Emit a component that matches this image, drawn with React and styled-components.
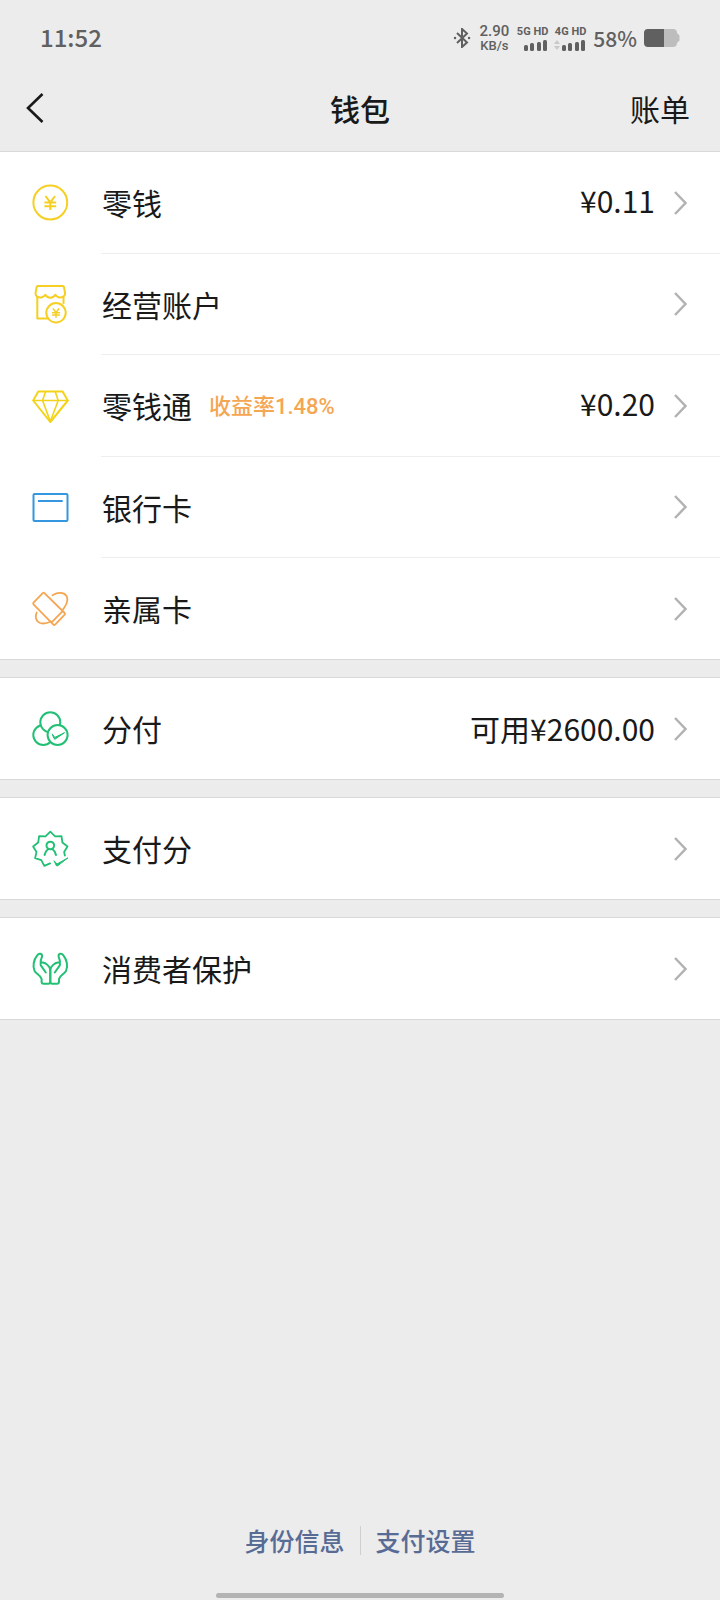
import React from 'react';
import styled, { createGlobalStyle, ThemeProvider } from 'styled-components';

const theme = {
  colors: {
    page: '#ececec',
    white: '#ffffff',
    text: '#191919',
    status: '#606060',
    line: '#d9d9d9',
    divider: '#eeeeee',
    arrow: '#b2b2b2',
    link: '#576b95',
    yellow: '#f5cf22',
    gold: '#f3d318',
    blue: '#3597df',
    orange: '#f5a652',
    green: '#22c074',
  },
};

const GlobalStyle = createGlobalStyle`
* {
  box-sizing: border-box;
}
body {
  margin: 0;
  background: #ececec;
  font-family: "Noto Sans CJK SC", "Noto Sans", sans-serif;
}
button {
  border: 0;
  padding: 0;
  background: none;
  color: inherit;
  font: inherit;
  text-align: left;
  cursor: pointer;
}
`

const Page = styled.div`
display: flex;
flex-direction: column;
min-height: 100vh;
color: ${(props) => props.theme.colors.text};
background: ${(props) => props.theme.colors.page};
`
const StatusBar = styled.div`
display: flex;
align-items: center;
justify-content: space-between;
height: 68px;
padding: 8px 40px 0;
color: ${(props) => props.theme.colors.status};
`
const Clock = styled.time`
padding-bottom: 3px;
font-size: 24px;
font-weight: 500;
line-height: 32px;
`
const StatusIcons = styled.div`
display: flex;
align-items: center;
gap: 7px;
`
const NetSpeed = styled.div`
display: flex;
flex-direction: column;
align-items: center;
margin-left: 2px;
font-family: Roboto, sans-serif;
font-size: 15px;
font-weight: 500;
line-height: 15px;
`
const SpeedUnit = styled.span`
font-size: 13px;
line-height: 14px;
`
const Signals = styled.div`
display: flex;
gap: 6px;
`
const Signal = styled.div`
display: flex;
flex-direction: column;
align-items: flex-end;
gap: 2px;
font-family: Roboto, sans-serif;
font-size: 11px;
font-weight: 700;
line-height: 11px;
`
const Percent = styled.span`
font-size: 21px;
font-weight: 500;
line-height: 28px;
`
const NavBar = styled.header`
display: grid;
grid-template-columns: 1fr auto 1fr;
align-items: center;
height: 84px;
padding: 0 30px 3px;
border-bottom: 1px solid ${(props) => props.theme.colors.line};
`
const BackButton = styled.button`
display: flex;
justify-self: start;
margin-left: -4px;
`
const Title = styled.h1`
margin: 0;
font-size: 30px;
font-weight: 500;
line-height: 44px;
`
const BillButton = styled.button`
justify-self: end;
font-size: 30px;
line-height: 44px;
`
const Groups = styled.main`
display: flex;
flex-direction: column;
gap: 17px;
`
const Group = styled.ul`
margin: 0;
padding: 0;
list-style: none;
background: ${(props) => props.theme.colors.white};
border-top: 1px solid ${(props) => props.theme.colors.line};
border-bottom: 1px solid ${(props) => props.theme.colors.line};
&:first-child {
  border-top: 0;
}
`
const Row = styled.button`
display: flex;
width: 100%;
min-height: 101px;
li:nth-child(odd):not(:last-child) > & {
  min-height: 102px;
}
`
const RowIcon = styled.span`
display: flex;
align-items: center;
align-self: stretch;
width: 101px;
padding-left: 30px;
`
const RowBody = styled.span`
display: flex;
flex: 1;
align-items: center;
align-self: stretch;
padding: 0 32px 0 1px;
li:not(:last-child) & {
  border-bottom: 1px solid ${(props) => props.theme.colors.divider};
}
`
const Label = styled.span`
padding-bottom: 1px;
font-size: 30px;
line-height: 44px;
`
const Rate = styled.span`
margin-left: 17px;
padding-top: 2px;
font-family: Roboto, "Noto Sans CJK SC", sans-serif;
font-size: 22px;
font-weight: 500;
line-height: 32px;
color: ${(props) => props.theme.colors.orange};
`
const Amount = styled.span`
margin-left: auto;
padding-bottom: ${(props) => (props.$raised ? '6px' : '2px')};
font-size: 30px;
line-height: 44px;
`
const Arrow = styled.svg`
flex: none;
margin-left: ${(props) => (props.$alone ? 'auto' : '19px')};
color: ${(props) => props.theme.colors.arrow};
`
const Footer = styled.footer`
display: flex;
flex-direction: column;
align-items: center;
gap: 35px;
margin-top: auto;
padding-bottom: 2px;
`
const FooterLinks = styled.nav`
display: flex;
align-items: center;
`
const FooterLink = styled.a`
padding: 0 15px;
font-size: 25px;
font-weight: 500;
line-height: 36px;
color: ${(props) => props.theme.colors.link};
text-decoration: none;
`
const FooterLine = styled.span`
width: 1px;
height: 29px;
background: #cfcfcf;
`
const HomeBar = styled.div`
width: 40%;
height: 5px;
border-radius: 3px;
background: #b3b3b3;
`
const IconSvg = styled.svg`
flex: none;
fill: none;
stroke: ${(props) => props.theme.colors[props.$color]};
stroke-width: 2;
stroke-linecap: round;
stroke-linejoin: round;
`

const Icon = ({ color, children }) => (
  <IconSvg $color={color} width="40" height="40" viewBox="0 0 40 40" aria-hidden="true">
    {children}
  </IconSvg>
)

const CoinIcon = () => (
  <Icon color="yellow">
    <circle cx="20.3" cy="19.5" r="16.9" />
    <path strokeLinecap="butt" d="M15.5 13l4.8 6.3 4.8-6.3M20.3 19.3v7.6M14.4 19.5h11.8M14.4 23.2h11.8" />
  </Icon>
)

const ShopIcon = () => (
  <Icon color="yellow">
    <path d="M5.6 8l1-5.800q.3-1.300 1.600-1.300h24.200q1.300 0 1.600 1.300L35 8c.6 3.200-3.400 5.200-6.400 4.200-1.600-.5-2.600-1.400-3.300-2.400-2 3.800-8 3.800-10 0-.7 1-1.700 1.900-3.300 2.400-3 1-7-1-6.400-4.200z" />
    <path d="M7.300 12.300v21.100h9.900M33.500 12.300v6" />
    <circle cx="26" cy="27.800" r="9.700" />
    <path strokeWidth="1.500" d="M23.200 23.800l2.800 3.700 2.800-3.700M26 27.500v4.700M22.500 27.700h7M22.500 30h7" />
  </Icon>
)

const DiamondIcon = () => (
  <Icon color="gold">
    <path d="M8.300 5.500h24.300l5.200 9-17.500 21.500L3.200 14.500z" />
    <path strokeWidth="1.600" d="M3.200 14.500h34.600M15.600 5.500l-3 9 7.700 21L28.200 14.500l-3-9" />
  </Icon>
)

const CardIcon = () => (
  <Icon color="blue">
    <rect x="3.500" y="6" width="34" height="27" rx="1" />
    <path strokeLinecap="butt" d="M8 13h24.700" />
  </Icon>
)

const FamilyCardIcon = () => (
  <Icon color="orange">
    <path strokeWidth="1.800" d="M12.700 4.100L3.500 13.600q-.8.900 0 1.700l19.900 20.300q.9.800 1.700 0l9.600-9.900q.7-.8 0-1.700L14.400 4.100q-.9-.8-1.700 0zM21.600 33.400l10.800-11" />
    <path strokeWidth="1.800" d="M22.500 6.200C28 3 33.800 3.200 36.300 6.700c2.500 3.800.2 9-3.300 13.800M6.700 23.500C4.800 28 6 32.500 10 34c3.500 1 7.500.2 10.700-1.500" />
  </Icon>
)

const CirclesIcon = () => (
  <Icon color="green">
    <circle cx="13.300" cy="26" r="10" />
    <circle cx="20.300" cy="13.300" r="10" fill="#fff" />
    <circle cx="27.600" cy="26" r="10" fill="#fff" />
    <path fill="#22c074" strokeWidth="1" d="M22.400 25.200l2.400 3.200 9.700-4.700-9.300 6.400q-.6.300-1-.3z" />
  </Icon>
)

const ScoreIcon = () => (
  <Icon color="green">
    <path
      strokeWidth="1.800"
      d="M34.900 26.500l-.8-3.600 3.400-5.400-5.100-4-.9-6.400-6.400.2L20.300 2.700l-4.800 4.600-6.400-.2-.9 6.400-5.100 4 3.400 5.400-1.400 6.300 6.200 2 3 5.700 5.800-2.500"
    />
    <circle cx="20.300" cy="16.500" r="3.800" />
    <path d="M18.300 20c-2 1.400-3.200 3.200-3.700 6M22.300 20c2 1.400 3.200 3.200 3.700 6" />
    <path fill="#22c074" strokeWidth="1" d="M24.300 32l2.700 3 11-6.200-10.300 8q-1 .6-1.500-.4z" />
  </Icon>
)

const HandPath = 'M12 7.400C12.400 4.400 9 3.800 7.200 6.300 3.800 10.500 2.300 17.500 4.600 22c2 3.400 6.400 4.500 7 8v2.700q0 2 2 2h4.700q2 0 2-2V20.500c-.8-3.500-4.300-6.500-7.500-7-2-.3-2.800 1.500-1.800 3.200l4.800 6.800M12 7.400c-.3 2.400-1.900 3.600-1.300 7.200'

const HandsIcon = () => (
  <Icon color="green">
    <path d={HandPath} />
    <path d={HandPath} transform="translate(40.600 0) scale(-1 1)" />
  </Icon>
)

const SignalBars = ({ data }) => (
  <svg width="32" height="12" viewBox="0 0 32 12" fill="currentColor" aria-hidden="true">
    {data && <path fill="#c9c9c9" d="M0 5l3-4 3 4zM0 7h6l-3 4z" />}
    <rect x="8" y="6" width="4" height="6" rx="1.500" />
    <rect x="14" y="4" width="4" height="8" rx="1.500" />
    <rect x="21" y="3" width="4" height="9" rx="1.500" />
    <rect x="27" y="1" width="4" height="11" rx="1.500" />
  </svg>
)

const groups = [
  [
    { label: '零钱', icon: CoinIcon, amount: '¥0.11', raised: true },
    { label: '经营账户', icon: ShopIcon },
    { label: '零钱通', icon: DiamondIcon, rate: '收益率1.48%', amount: '¥0.20', raised: true },
    { label: '银行卡', icon: CardIcon },
    { label: '亲属卡', icon: FamilyCardIcon },
  ],
  [{ label: '分付', icon: CirclesIcon, amount: '可用¥2600.00' }],
  [{ label: '支付分', icon: ScoreIcon }],
  [{ label: '消费者保护', icon: HandsIcon }],
]

const WalletRow = ({ label, icon: RowGlyph, rate, amount, raised }) => (
  <li>
    <Row type="button">
      <RowIcon><RowGlyph /></RowIcon>
      <RowBody>
        <Label>{label}</Label>
        {rate && <Rate>{rate}</Rate>}
        {amount && <Amount $raised={raised}>{amount}</Amount>}
        <Arrow $alone={!amount} width="14" height="24" viewBox="0 0 14 24" fill="none" stroke="currentColor" strokeWidth="2.500" aria-hidden="true">
          <path d="M1 1l10.500 11L1 23" />
        </Arrow>
      </RowBody>
    </Row>
  </li>
)

export default function App() {
  return (
    <ThemeProvider theme={theme}>
      <GlobalStyle />
      <Page>
        <StatusBar>
          <Clock>11:52</Clock>
          <StatusIcons>
            <svg width="18" height="20" viewBox="0 0 18 20" fill="none" stroke="currentColor" strokeWidth="2" aria-hidden="true">
              <path d="M4 5l10 9.500-5 4.500V1l5 4.500L4 15" />
              <path strokeWidth="2.400" strokeLinecap="round" d="M2 10h.1M16 10h.1" />
            </svg>
            <NetSpeed>
              <span>2.90</span>
              <SpeedUnit>KB/s</SpeedUnit>
            </NetSpeed>
            <Signals>
              <Signal>
                5G HD
                <SignalBars />
              </Signal>
              <Signal>
                4G HD
                <SignalBars data />
              </Signal>
            </Signals>
            <Percent>58%</Percent>
            <svg width="36" height="18" viewBox="0 0 36 18" aria-hidden="true">
              <path fill="#bdbdbd" d="M20 0h9q4 0 4 4l2.500 2.500v5L33 14q0 4-4 4h-9z" />
              <path fill="#606060" d="M4 0h16v18H4q-4 0-4-4V4q0-4 4-4z" />
            </svg>
          </StatusIcons>
        </StatusBar>
        <NavBar>
          <BackButton type="button" aria-label="返回">
            <svg width="18" height="30" viewBox="0 0 18 30" fill="none" stroke="currentColor" strokeWidth="2.600" aria-hidden="true">
              <path d="M16.500 1L2 15l14.500 14" />
            </svg>
          </BackButton>
          <Title>钱包</Title>
          <BillButton type="button">账单</BillButton>
        </NavBar>
        <Groups>
          {groups.map((rows) => (
            <Group key={rows[0].label}>
              {rows.map((row) => <WalletRow key={row.label} {...row} />)}
            </Group>
          ))}
        </Groups>
        <Footer>
          <FooterLinks>
            <FooterLink href="#identity">身份信息</FooterLink>
            <FooterLine />
            <FooterLink href="#settings">支付设置</FooterLink>
          </FooterLinks>
          <HomeBar />
        </Footer>
      </Page>
    </ThemeProvider>
  )
}
